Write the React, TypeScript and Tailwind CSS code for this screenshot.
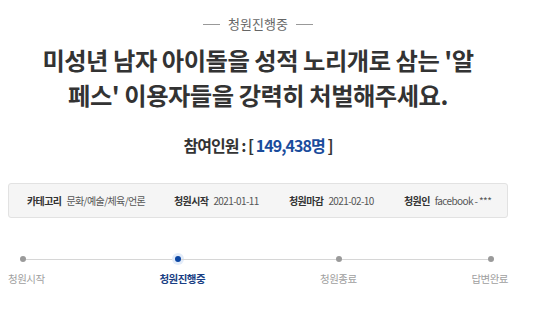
import React from "react"

const info = [
  { label: "카테고리", value: "문화/예술/체육/언론", w: "w-[147px]" },
  { label: "청원시작", value: "2021-01-11", w: "w-[115px]" },
  { label: "청원마감", value: "2021-02-10", w: "w-[115px]" },
  { label: "청원인", value: "facebook - ***", w: "w-[100px]" },
]

const steps = [
  { name: "청원시작", active: false },
  { name: "청원진행중", active: true },
  { name: "청원종료", active: false },
  { name: "답변완료", active: false },
]

function Dot({ active }: { active: boolean }) {
  if (active) {
    return <span className="w-[6px] h-[6px] rounded-full bg-[#0b46a3] shadow-[0_0_0_3px_#e3ecf9] shrink-0" />
  }
  return <span className="w-[6px] h-[6px] rounded-full bg-[#9a9a9a] shrink-0" />
}

export default function App() {
  return (
    <div className="w-[540px] h-[311px] bg-white overflow-hidden font-['Noto_Sans_CJK_KR','Noto_Sans',sans-serif]">
      <div className="w-[500px] ml-2">
        {/* status header */}
        <div className="flex items-center justify-center gap-[8px] pt-[15px] text-[13px] leading-[18px] text-[#666]">
          <span className="w-[17px] h-px bg-[#999]" />
          <span>청원진행중</span>
          <span className="w-[17px] h-px bg-[#999]" />
        </div>

        {/* title */}
        <h1 className="mt-[9px] text-center text-[24.3px] leading-[35px] font-bold text-[#333] tracking-[-0.02em]">
          미성년 남자 아이돌을 성적 노리개로 삼는 '알
          <br />
          페스' 이용자들을 강력히 처벌해주세요.
        </h1>

        {/* participants */}
        <p className="mt-[20px] text-center text-[16px] leading-[26px] font-bold text-[#333] tracking-[-0.06em]">
          참여인원 : [ <span className="text-[#1a4c9c]">149,438명</span> ]
        </p>

        {/* info box */}
        <div className="mt-[25px] h-[35px] flex items-center pl-[18px] bg-[#f5f5f5] border border-[#e2e2e2] rounded-[3px] text-[10px] whitespace-nowrap">
          {info.map((item) => (
            <div key={item.label} className={`${item.w} flex items-center gap-[5px]`}>
              <span className="font-bold text-[#333] tracking-[-0.06em]">{item.label}</span>
              <span className="text-[#555] tracking-[-0.06em]">{item.value}</span>
            </div>
          ))}
        </div>

        {/* progress */}
        <div className="mt-[38px] flex items-center pl-[12px]">
          <Dot active={false} />
          <span className="w-[149px] h-px bg-[#d6d6d6]" />
          <Dot active={true} />
          <span className="w-[155px] h-px bg-[#d6d6d6]" />
          <Dot active={false} />
          <span className="w-[146px] h-px bg-[#d6d6d6]" />
          <Dot active={false} />
        </div>
        <div className="mt-[9px] flex justify-between text-[10.5px] leading-[16px] tracking-[-0.05em]">
          {steps.map((s) => (
            <span key={s.name} className={s.active ? "font-bold text-[#1a3f84]" : "text-[#a0a0a0]"}>
              {s.name}
            </span>
          ))}
        </div>
      </div>
    </div>
  )
}
